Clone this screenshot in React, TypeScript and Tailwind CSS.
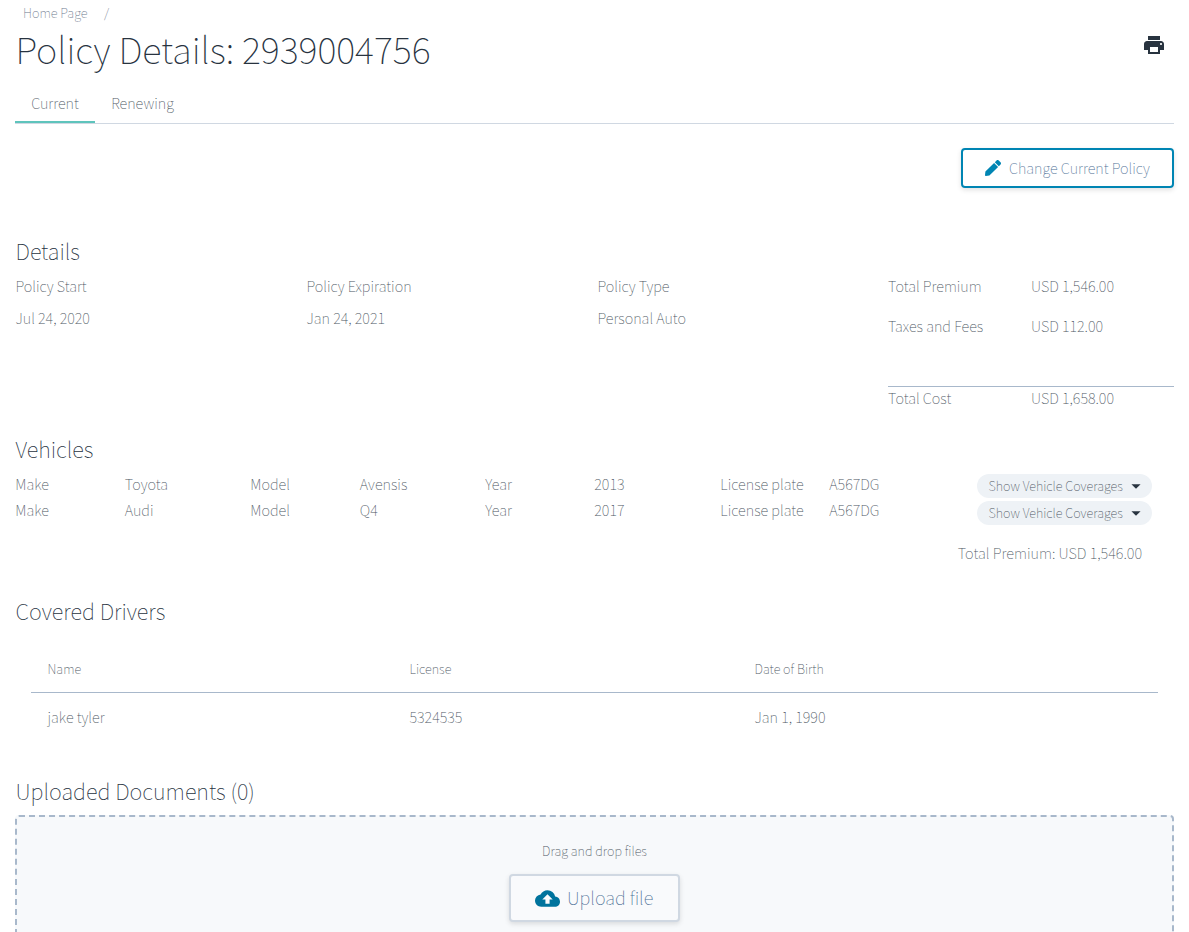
import React from "react";
import { MdPrint, MdCloudUpload, MdArrowDropDown } from "react-icons/md";
import { FaPen } from "react-icons/fa";

const details = [
  ["Policy Start", "Jul 24, 2020"],
  ["Policy Expiration", "Jan 24, 2021"],
  ["Policy Type", "Personal Auto"],
];

const vehicles = [
  { make: "Toyota", model: "Avensis", year: "2013", plate: "A567DG" },
  { make: "Audi", model: "Q4", year: "2017", plate: "A567DG" },
];

function Heading({ children }: { children: React.ReactNode }) {
  return <h2 className="h-[30px] pl-[0.5px] text-[21.75px] leading-[29px] font-thin text-[#28333f]">{children}</h2>;
}

function CoverageButton() {
  return (
    <button className="flex h-6 w-[175px] items-center rounded-full bg-[#eef2f6] pl-[11.5px] text-[12.7px] leading-6 whitespace-nowrap text-[#4b5561]">
      Show Vehicle Coverages
      <MdArrowDropDown className="ml-0.5 size-[22px] shrink-0 text-[#28333f]" />
    </button>
  );
}

export default function App() {
  return (
    <div className="h-[932px] overflow-hidden bg-white px-[15px] font-['Noto_Sans_CJK_SC',sans-serif] text-[14.5px] leading-5 font-thin text-[#4b5561]">
      <nav className="flex h-[25px] pl-2 text-[12.8px] leading-[25px] text-[#6b788c]">
        <span className="w-[81px]">Home Page</span>
        <span>/</span>
      </nav>
      <header className="flex h-[60px] justify-between">
        <h1 className="h-12 pl-[0.5px] text-[36.2px] leading-[46px] text-[#28333f]">Policy Details: 2939004756</h1>
        <MdPrint className="mt-2 mr-2 size-6 text-[#28333f]" />
      </header>
      <div className="flex h-[39px] border-b border-[#d0d8e2]">
        <div className="h-[38px] w-20 border-b-2 border-[#5ec4bc] text-center leading-9">Current</div>
        <div className="w-[95px] text-center leading-9">Renewing</div>
      </div>
      <div className="mt-6 flex justify-end">
        <button className="flex h-10 w-[213px] items-center rounded border-2 border-[#0085b3] pl-[22px] whitespace-nowrap text-[#4e7096] shadow-[0_2px_5px_rgba(0,0,0,0.12)]">
          <FaPen className="mr-[8px] size-4 shrink-0 text-[#0085b3]" />
          Change Current Policy
        </button>
      </div>

      <section className="mt-12 h-[199px]">
        <Heading>Details</Heading>
        <div className="mt-2.5 grid grid-cols-4 gap-[5px]">
          {details.map(([label, value]) => (
            <dl key={label} className="pl-[0.5px]">
              <dt>{label}</dt>
              <dd className="mt-3">{value}</dd>
            </dl>
          ))}
          <div>
            <div className="grid grid-cols-2 gap-y-5">
              <span>Total Premium</span>
              <span>USD 1,546.00</span>
              <span>Taxes and Fees</span>
              <span>USD 112.00</span>
            </div>
            <div className="mt-[50px] grid grid-cols-2 border-t border-[#a8b8cb] pt-px">
              <span>Total Cost</span>
              <span>USD 1,658.00</span>
            </div>
          </div>
        </div>
      </section>

      <section className="-mt-px h-[163px]">
        <Heading>Vehicles</Heading>
        <div className="mt-2.5 flex">
          <div className="w-[962px]">
            {vehicles.map((v) => (
              <div key={v.make} className="grid h-[26px] grid-cols-[109.5px_125.5px_109.5px_125.5px_109px_126px_109px_1fr] pl-[0.3px]">
                <span>Make</span>
                <span>{v.make}</span>
                <span>Model</span>
                <span>{v.model}</span>
                <span>Year</span>
                <span>{v.year}</span>
                <span>License plate</span>
                <span>{v.plate}</span>
              </div>
            ))}
          </div>
          <div className="flex flex-col gap-[3px]">
            {vehicles.map((v) => (
              <CoverageButton key={v.make} />
            ))}
          </div>
        </div>
        <p className="mt-[17px] mr-8 text-right text-[14.6px]">Total Premium: USD 1,546.00</p>
      </section>

      <section className="-mt-px h-[180px]">
        <Heading>Covered Drivers</Heading>
        <div className="mx-4 mt-[19px]">
          <div className="grid h-[48px] grid-cols-[362px_345px_1fr] border-b border-[#a8b8cb] pl-[16.5px] text-[12.7px] leading-[48px]">
            <span>Name</span>
            <span>License</span>
            <span>Date of Birth</span>
          </div>
          <div className="grid h-[50px] grid-cols-[362px_345px_1fr] pl-[16.5px] leading-[48px]">
            <span>jake tyler</span>
            <span>5324535</span>
            <span>Jan 1, 1990</span>
          </div>
        </div>
      </section>

      <section>
        <Heading>Uploaded Documents (0)</Heading>
        <div className="mt-[9px] flex h-[140px] flex-col items-center rounded border-2 border-dashed border-[#a8b8cb] bg-[#f7f9fb] pt-6">
          <p className="text-[12.7px]">Drag and drop files</p>
          <button className="mt-[13px] flex h-12 w-[171px] shrink-0 items-center rounded border-2 border-[#d0d8e2] bg-[#f9fafc] pl-6 text-[18.1px] leading-6 whitespace-nowrap text-[#4e7096] shadow-[0_2px_5px_rgba(0,0,0,0.12)]">
            <MdCloudUpload className="mr-[7px] size-[25px] shrink-0 text-[#00739d]" />
            <span className="-mt-0.5">Upload file</span>
          </button>
        </div>
      </section>
    </div>
  );
}
